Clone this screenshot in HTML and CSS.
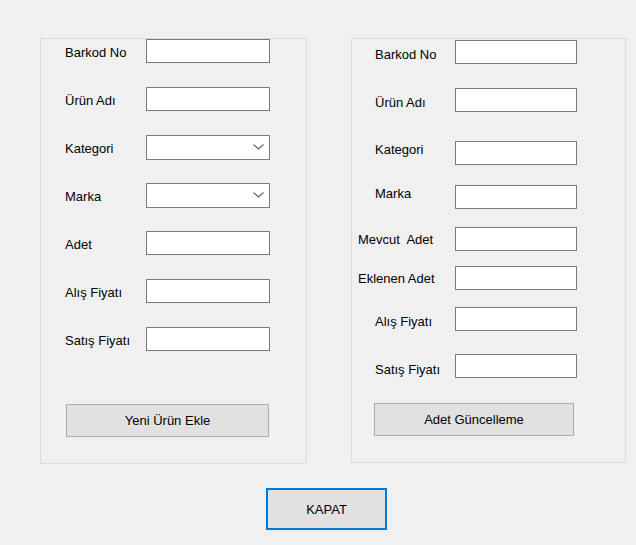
FILE: index.html
```html
<!DOCTYPE html>
<html lang="tr">
<head>
    <meta charset="UTF-8">
    <meta name="viewport" content="width=device-width, initial-scale=1.0">
    <title>Ürün İşlemleri</title>
    <link rel="stylesheet" href="styles.css">
</head>
<body>
    <div class="panels">
        <!-- yeni ürün -->
        <div class="panel panel-left">
            <div class="row">
                <label for="barkod1">Barkod No</label>
                <input type="text" id="barkod1">
            </div>
            <div class="row">
                <label for="ad1">Ürün Adı</label>
                <input type="text" id="ad1">
            </div>
            <div class="row">
                <label for="kategori1">Kategori</label>
                <div class="combo" id="kategori1">
                    <svg width="11" height="6" viewBox="0 0 11 6"><path d="M0.5 0.5 L5.5 5 L10.5 0.5" fill="none" stroke="#606060" stroke-width="1.1"/></svg>
                </div>
            </div>
            <div class="row">
                <label for="marka1">Marka</label>
                <div class="combo" id="marka1">
                    <svg width="11" height="6" viewBox="0 0 11 6"><path d="M0.5 0.5 L5.5 5 L10.5 0.5" fill="none" stroke="#606060" stroke-width="1.1"/></svg>
                </div>
            </div>
            <div class="row">
                <label for="adet1">Adet</label>
                <input type="text" id="adet1">
            </div>
            <div class="row">
                <label for="alis1">Alış Fiyatı</label>
                <input type="text" id="alis1">
            </div>
            <div class="row">
                <label for="satis1">Satış Fiyatı</label>
                <input type="text" id="satis1">
            </div>
            <button class="btn btn-add">Yeni Ürün Ekle</button>
        </div>

        <!-- adet güncelleme -->
        <div class="panel panel-right">
            <div class="row r1">
                <label class="down" for="barkod2">Barkod No</label>
                <input type="text" id="barkod2">
            </div>
            <div class="row r2">
                <label class="down" for="ad2">Ürün Adı</label>
                <input type="text" id="ad2">
            </div>
            <div class="row r3">
                <label class="up" for="kategori2">Kategori</label>
                <input type="text" id="kategori2">
            </div>
            <div class="row r4">
                <label class="up" for="marka2">Marka</label>
                <input type="text" id="marka2">
            </div>
            <div class="row r5">
                <label class="wide" for="mevcut2">Mevcut&nbsp; Adet</label>
                <input type="text" id="mevcut2">
            </div>
            <div class="row r6">
                <label class="wide" for="eklenen2">Eklenen Adet</label>
                <input type="text" id="eklenen2">
            </div>
            <div class="row r7">
                <label class="down" for="alis2">Alış Fiyatı</label>
                <input type="text" id="alis2">
            </div>
            <div class="row r8">
                <label class="down more" for="satis2">Satış Fiyatı</label>
                <input type="text" id="satis2">
            </div>
            <button class="btn btn-update">Adet Güncelleme</button>
        </div>
    </div>

    <div class="footer">
        <button class="btn btn-close">KAPAT</button>
    </div>
</body>
</html>
```

FILE: styles.css
```css
body {
    margin: 0;
    background-color: #f0f0f0;
    font-family: "Liberation Sans", Arial, sans-serif;
    font-size: 13px;
    color: #000;
}
.panels {
    display: flex;
    align-items: flex-start;
    gap: 44px;
    padding: 38px 0 0 40px;
}
.panel {
    box-sizing: border-box;
    border: 1px solid #dcdcdc;
    display: flex;
    flex-direction: column;
}
.panel-left {
    width: 267px;
    height: 426px;
    gap: 24px;
    padding-left: 24px;
}
.panel-right {
    width: 275px;
    height: 425px;
}
.row {
    display: flex;
    align-items: center;
    height: 24px;
}
label {
    display: block;
    white-space: nowrap;
}
.panel-left label {
    width: 81px;
    margin-top: 2px;
}
.panel-right .row {
    padding-left: 6px;
}
.panel-right label {
    box-sizing: border-box;
    width: 97px;
    padding-left: 17px;
}
.panel-right label.wide {
    padding-left: 0;
}
.panel-right label.down {
    margin-top: 4px;
}
.panel-right label.down.more {
    margin-top: 6px;
}
.panel-right label.up {
    margin-bottom: 8px;
}
.r1 { margin-top: 1px; }
.r2 { margin-top: 24px; }
.r3 { margin-top: 29px; }
.r4 { margin-top: 20px; }
.r5 { margin-top: 18px; }
.r6 { margin-top: 15px; }
.r7 { margin-top: 17px; }
.r8 { margin-top: 23px; }
input, .combo {
    box-sizing: border-box;
    height: 24px;
    background: #fff;
    border: 1px solid #7a7a7a;
    margin: 0;
    padding: 0 3px;
    font: inherit;
}
.panel-left input, .combo {
    width: 124px;
}
.panel-right input {
    width: 122px;
}
.combo {
    height: 25px;
    display: flex;
    align-items: center;
    justify-content: flex-end;
    padding-right: 5px;
}
.btn {
    box-sizing: border-box;
    background-color: #e1e1e1;
    border: 1px solid #adadad;
    font: inherit;
    color: #000;
    padding: 0;
}
.btn-add {
    width: 203px;
    height: 33px;
    margin: 29px 0 0 1px;
}
.btn-update {
    width: 200px;
    height: 33px;
    margin: 25px 0 0 22px;
}
.footer {
    padding: 24px 0 0 266px;
}
.btn-close {
    width: 121px;
    height: 42px;
    border: 2px solid #0078d7;
}
```
